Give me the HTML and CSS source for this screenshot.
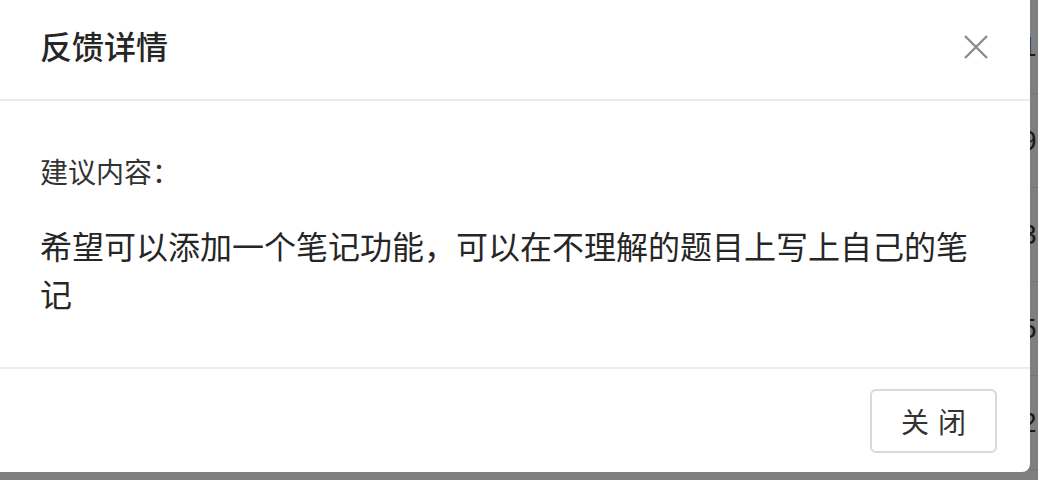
FILE: index.html
```html
<!DOCTYPE html>
<html lang="zh-CN">
<head>
    <meta charset="UTF-8">
    <title>反馈详情</title>
    <link rel="stylesheet" href="styles.css">
</head>
<body>
<div class="page">
    <div class="row">1</div>
    <div class="row">9</div>
    <div class="row">3</div>
    <div class="row">5</div>
    <div class="row">2</div>
</div>
<div class="mask"></div>
<div class="dialog">
    <div class="dialog-header">
        <span class="dialog-title">反馈详情</span>
        <button class="dialog-close" aria-label="关闭">
            <svg width="24" height="24" viewBox="0 0 24 24">
                <path d="M1 1 L23 23 M23 1 L1 23" stroke="#8c8c8c" stroke-width="2.4" fill="none"/>
            </svg>
        </button>
    </div>
    <div class="dialog-body">
        <p class="label">建议内容：</p>
        <p class="content">希望可以添加一个笔记功能，可以在不理解的题目上写上自己的笔记</p>
    </div>
    <div class="dialog-footer">
        <button class="btn">关闭</button>
    </div>
</div>
</body>
</html>
```

FILE: styles.css
```css
body {
    margin: 0;
    width: 1038px;
    height: 480px;
    overflow: hidden;
    font-family: "Liberation Sans", "Noto Sans CJK SC", sans-serif;
    background-color: #fff;
    color: #333;
}
.page {
    display: flex;
    flex-direction: column;
}
.row {
    height: 93px;
    border-bottom: 1px solid #e8e8e8;
    padding-left: 1021px;
    font-size: 28px;
    line-height: 93px;
    color: #333;
}
.mask {
    position: absolute;
    top: 0;
    left: 0;
    right: 0;
    bottom: 0;
    background-color: rgba(0, 0, 0, 0.5);
}
.dialog {
    position: absolute;
    top: 0;
    left: 0;
    width: 1030px;
    height: 472px;
    display: flex;
    flex-direction: column;
    background-color: #fff;
    border-radius: 0 0 8px 0;
    font-family: "Noto Sans CJK SC", sans-serif;
}
.dialog-header {
    height: 101px;
    display: flex;
    align-items: center;
    justify-content: space-between;
    padding: 0 42px 10px 40px;
    box-sizing: border-box;
    border-bottom: 2px solid #ececec;
    flex-shrink: 0;
}
.dialog-title {
    font-size: 32px;
    line-height: 32px;
    font-weight: 500;
    color: #262626;
}
.dialog-close {
    border: 0;
    padding: 0;
    margin-top: 4px;
    background: none;
    width: 24px;
    height: 24px;
    display: flex;
}
.dialog-body {
    flex: 1;
    padding: 0 40px;
}
.label {
    margin: 50px 0 0;
    font-size: 28px;
    line-height: 40px;
    color: #333;
}
.content {
    margin: 30px 0 0;
    font-size: 32px;
    line-height: 48px;
    color: #262626;
}
.dialog-footer {
    display: flex;
    justify-content: flex-end;
    padding: 20px 33px 19px;
    border-top: 2px solid #ececec;
}
.btn {
    width: 127px;
    height: 64px;
    border: 2px solid #d9d9d9;
    border-radius: 6px;
    background: #fff;
    font-family: "Noto Sans CJK SC", sans-serif;
    font-size: 28px;
    letter-spacing: 9px;
    text-indent: 9px;
    color: #333;
    padding: 0;
}
```
